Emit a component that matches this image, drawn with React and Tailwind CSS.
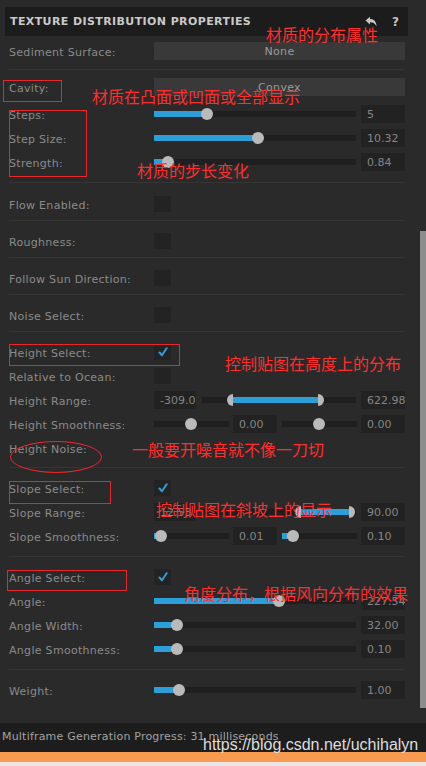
import React from "react";

const F = { fontFamily: '"DejaVu Sans", Verdana, sans-serif' };

function Label({ children }) {
  return (
    <div className="relative top-[1px] w-[145px] shrink-0 text-[11px] tracking-[0.3px] text-[#8b8b8b] whitespace-nowrap leading-none">
      {children}
    </div>
  );
}

function ValueBox({ v, w = 44 }) {
  return (
    <div
      className="h-[18px] shrink-0 bg-[#222222] text-[11px] text-[#858585] pl-[6px] flex items-center overflow-hidden whitespace-nowrap leading-none"
      style={{ width: w }}
    >
      {v}
    </div>
  );
}

function Track({ w, fill = 0, thumb = null, range = null }) {
  return (
    <div className="relative h-[12px] shrink-0 flex items-center" style={{ width: w }}>
      <div className="h-[6px] w-full bg-[#1f1f1f]" />
      {fill > 0 && (
        <div className="absolute left-0 top-[3px] h-[6px] bg-[#2c9fd9]" style={{ width: fill }} />
      )}
      {range && (
        <>
          <div
            className="absolute top-[3px] h-[6px] bg-[#2c9fd9]"
            style={{ left: range[0], width: range[1] - range[0] }}
          />
          <div
            className="absolute top-0 h-[12px] w-[6px] rounded-l-full bg-[#b9b9b9]"
            style={{ left: range[0] - 6 }}
          />
          <div
            className="absolute top-0 h-[12px] w-[6px] rounded-r-full bg-[#b9b9b9]"
            style={{ left: range[1] }}
          />
        </>
      )}
      {thumb !== null && (
        <div
          className="absolute top-0 h-[12px] w-[12px] rounded-full bg-[#bababa]"
          style={{ left: thumb - 6 }}
        />
      )}
    </div>
  );
}

function Row({ children, h = 24 }) {
  return (
    <div className="flex items-center" style={{ height: h }}>
      {children}
    </div>
  );
}

function SliderRow({ label, thumb, value }) {
  const t = thumb - 154;
  return (
    <Row>
      <Label>{label}</Label>
      <Track w={202} fill={t} thumb={t} />
      <div className="w-[5px] shrink-0" />
      <ValueBox v={value} />
    </Row>
  );
}

function Check({ checked }) {
  return (
    <div className="w-[17px] h-[16px] shrink-0 bg-[#232323] flex items-center justify-center">
      {checked && (
        <svg width="10" height="10" viewBox="0 0 10 10">
          <path d="M1.5 5.5 L4 8.2 L8.6 1.2" fill="none" stroke="#2c9fd9" strokeWidth="2" strokeLinecap="round" strokeLinejoin="round" />
        </svg>
      )}
    </div>
  );
}

function Sep() {
  return <div className="h-px bg-[#353535]" />;
}

function Dropdown({ text }) {
  return (
    <div className="w-[251px] h-[18px] bg-[#393939] flex items-center justify-center text-[11px] tracking-[0.3px] text-[#9b9b9b] leading-none">
      {text}
    </div>
  );
}

function ToggleBlock({ label, pt }) {
  return (
    <>
      <div className="flex items-center" style={{ paddingTop: pt, paddingBottom: 8 }}>
        <Label>{label}</Label>
        <Check />
      </div>
      <Sep />
    </>
  );
}

function Ann({ children, x, y }) {
  return (
    <div
      className="absolute text-[16px] leading-none text-[#ff2e2e] whitespace-nowrap"
      style={{ left: x, top: y, fontFamily: '"Noto Sans CJK SC", sans-serif' }}
    >
      {children}
    </div>
  );
}

function Box({ x, y, w, h }) {
  return (
    <div className="absolute border border-[#e8262b]" style={{ left: x, top: y, width: w, height: h }} />
  );
}

export default function App() {
  return (
    <div className="relative w-[426px] h-[766px] bg-[#2a2a2a] flex flex-col overflow-hidden" style={F}>
      <div className="flex flex-1 min-h-0">
        <div className="w-[420px] shrink-0">
          {/* header */}
          <div className="ml-[5px] mt-[7px] w-[403px] h-[29px] bg-[#1c1c1c] flex items-center pl-[5px] pr-[9px]">
            <div className="flex-1 text-[11px] font-bold tracking-[0.4px] text-[#c9c9c9] leading-none">
              TEXTURE DISTRIBUTION PROPERTIES
            </div>
            <svg width="12" height="12" viewBox="0 0 12 12" className="mr-[15px]">
              <path d="M0.5 4.5 L5 0.8 V3 C9 3 11.5 5.5 11.5 10.5 C10 7.5 8.5 6.3 5 6.3 V8.4 Z" fill="#c6c6c6" />
            </svg>
            <div className="text-[12px] font-bold text-[#c6c6c6] leading-none">?</div>
          </div>

          <div className="pl-[9px] pr-[15px]">
            <div className="h-[6px]" />
            <Row h={18}>
              <Label>Sediment Surface:</Label>
              <Dropdown text="None" />
            </Row>
            <div className="h-[9px]" />
            <Sep />
            <div className="h-[8px]" />
            <Row h={18}>
              <Label>Cavity:</Label>
              <Dropdown text="Convex" />
            </Row>
            <div className="h-[6px]" />
            <SliderRow label="Steps:" thumb={207} value="5" />
            <SliderRow label="Step Size:" thumb={258} value="10.32" />
            <Row>
              <Label>Strength:</Label>
              <Track w={202} fill={11} thumb={14} />
              <div className="w-[5px] shrink-0" />
              <ValueBox v="0.84" />
            </Row>
            <div className="h-[8px]" />
            <Sep />
            <ToggleBlock label="Flow Enabled:" pt={13} />
            <ToggleBlock label="Roughness:" pt={12} />
            <ToggleBlock label="Follow Sun Direction:" pt={12} />
            <ToggleBlock label="Noise Select:" pt={12} />

            <div className="h-[8px]" />
            <Row>
              <Label>Height Select:</Label>
              <Check checked />
            </Row>
            <Row>
              <Label>Relative to Ocean:</Label>
              <Check />
            </Row>
            <Row>
              <Label>Height Range:</Label>
              <ValueBox v="-309.09" w={42} />
              <div className="w-[6px] shrink-0" />
              <Track w={154} range={[31, 116]} />
              <div className="w-[5px] shrink-0" />
              <ValueBox v="622.98" />
            </Row>
            <Row>
              <Label>Height Smoothness:</Label>
              <Track w={75} thumb={37} />
              <div className="w-[4px] shrink-0" />
              <ValueBox v="0.00" />
              <div className="w-[5px] shrink-0" />
              <Track w={75} thumb={37} />
              <div className="w-[4px] shrink-0" />
              <ValueBox v="0.00" />
            </Row>
            <Row>
              <Label>Height Noise:</Label>
            </Row>
            <div className="h-[7px]" />
            <Sep />

            <div className="h-[8px]" />
            <Row>
              <Label>Slope Select:</Label>
              <Check checked />
            </Row>
            <Row>
              <Label>Slope Range:</Label>
              <ValueBox v="12.53" w={42} />
              <div className="w-[6px] shrink-0" />
              <Track w={154} range={[99, 147]} />
              <div className="w-[5px] shrink-0" />
              <ValueBox v="90.00" />
            </Row>
            <Row>
              <Label>Slope Smoothness:</Label>
              <Track w={75} fill={7} thumb={7} />
              <div className="w-[4px] shrink-0" />
              <ValueBox v="0.01" />
              <div className="w-[5px] shrink-0" />
              <Track w={75} fill={11} thumb={11} />
              <div className="w-[4px] shrink-0" />
              <ValueBox v="0.10" />
            </Row>
            <div className="h-[8px]" />
            <Sep />

            <div className="h-[8px]" />
            <Row>
              <Label>Angle Select:</Label>
              <Check checked />
            </Row>
            <SliderRow label="Angle:" thumb={279} value="227.54" />
            <SliderRow label="Angle Width:" thumb={177} value="32.00" />
            <SliderRow label="Angle Smoothness:" thumb={177} value="0.10" />
            <div className="h-[8px]" />
            <Sep />
            <div className="h-[8px]" />
            <SliderRow label="Weight:" thumb={179} value="1.00" />
          </div>
        </div>
        <div className="w-[6px] shrink-0 pt-[231px]">
          <div className="h-[477px] bg-[#8d8d8d]" />
        </div>
      </div>

      <div className="h-[29px] bg-[#1d1d1d] flex items-center pl-[2px] pb-[3px] text-[11px] tracking-[0.2px] text-[#a3a3a3] whitespace-nowrap leading-none">
        Multiframe Generation Progress: 31 milliseconds
      </div>
      <div className="h-[10px] bg-[#f89a4f]" />
      <div className="h-[4px] bg-[#ebe7e7]" />

      <div
        className="absolute left-[203px] top-[737px] text-[16px] leading-none text-[#dedede] whitespace-nowrap"
        style={{ fontFamily: '"Liberation Sans", Arial, sans-serif' }}
      >
        https://blog.csdn.net/uchihalyn
      </div>

      <Ann x={266} y={26}>材质的分布属性</Ann>
      <Ann x={92} y={88}>材质在凸面或凹面或全部显示</Ann>
      <Ann x={137} y={162}>材质的步长变化</Ann>
      <Ann x={225} y={355}>控制贴图在高度上的分布</Ann>
      <Ann x={132} y={441}>一般要开噪音就不像一刀切</Ann>
      <Ann x={156} y={501}>控制贴图在斜坡上的显示</Ann>
      <Ann x={184} y={585}>角度分布，根据风向分布的效果</Ann>

      <Box x={3} y={80} w={59} h={22} />
      <Box x={9} y={110} w={78} h={67} />
      <Box x={9} y={344} w={171} h={22} />
      <Box x={9} y={481} w={102} h={23} />
      <Box x={7} y={570} w={120} h={21} />
      <div className="absolute left-[10px] top-[441px] w-[92px] h-[32px] rounded-[50%] border border-[#e8262b]" />
    </div>
  );
}
